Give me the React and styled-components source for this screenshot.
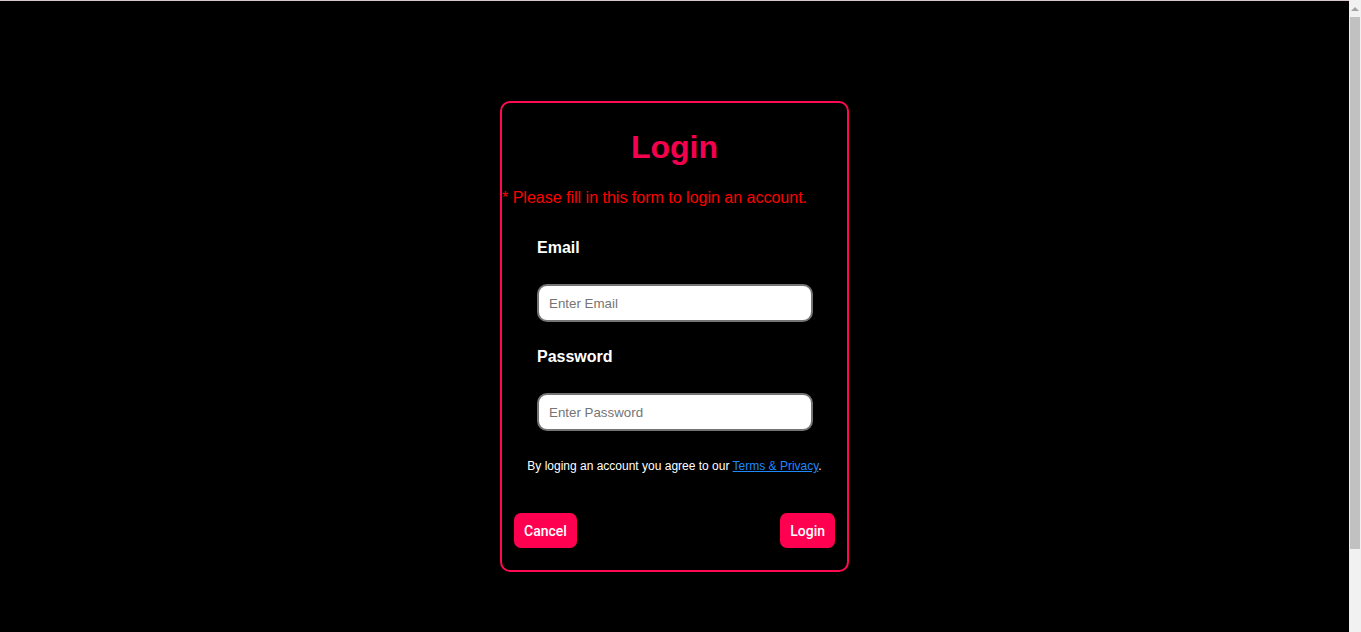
import styled, { createGlobalStyle } from "styled-components";

const GlobalStyle = createGlobalStyle`
  html {
    border-top: 1px solid #d6c6cd;
    background: #000;
  }
  body {
    margin: 0;
    background: #000;
    font-family: "Liberation Sans", Arial, sans-serif;
  }
`;

const Page = styled.div`
  padding: 100px 12px 138px 0;
  display: flex;
  justify-content: center;
`;

const ScrollTrack = styled.div`
  position: fixed;
  top: 0;
  right: 0;
  bottom: 0;
  width: 12px;
  background: #f1f1f1;
  display: flex;
  flex-direction: column;
  align-items: center;
`;

const ScrollArrow = styled.div`
  width: 0;
  height: 0;
  margin-top: 7px;
  border-left: 4px solid transparent;
  border-right: 4px solid transparent;
  border-bottom: 4px solid #a3a3a3;
`;

const ScrollThumb = styled.div`
  width: 10px;
  height: 532px;
  margin-top: 6px;
  background: #c1c1c1;
`;

const Card = styled.form`
  width: 345px;
  height: 467px;
  border: 2px solid #ff0a50;
  border-radius: 10px;
  display: flex;
  flex-direction: column;
`;

const Title = styled.h1`
  margin: 26px 0 23px;
  font-size: 32px;
  font-weight: bold;
  text-align: center;
  color: #f5004f;
`;

const Notice = styled.p`
  margin: 0;
  font-size: 16px;
  color: #ff0000;
`;

const Fields = styled.div`
  padding: 32px 35px 0;
`;

const Label = styled.label`
  display: block;
  font-size: 16px;
  font-weight: bold;
  color: #fff;
  margin-bottom: 27px;
`;

const Input = styled.input`
  display: block;
  box-sizing: border-box;
  width: 276px;
  height: 38px;
  margin: 0 0 26px;
  padding: 0 10px;
  border: 2px solid #747474;
  border-radius: 10px;
  background: #fff;
  font-family: "Liberation Sans", Arial, sans-serif;
  font-size: 13.333px;
  outline: none;

  &::placeholder {
    color: #757575;
  }
`;

const Terms = styled.p`
  margin: 2px 0 0;
  font-size: 12px;
  color: #fff;
  text-align: center;

  a {
    color: #1e88ff;
  }
`;

const Actions = styled.div`
  margin-top: 40px;
  padding: 0 12px;
  display: flex;
  justify-content: space-between;
`;

const Button = styled.button`
  height: 35px;
  padding: 0 10px;
  border: none;
  border-radius: 7px;
  background: #ff0050;
  color: #fff;
  font-family: Roboto, "Liberation Sans", sans-serif;
  font-size: 14px;
  font-weight: 500;
  cursor: pointer;
`;

export default function App() {
  return (
    <>
      <GlobalStyle />
      <Page>
        <Card onSubmit={(e) => e.preventDefault()}>
          <Title>Login</Title>
          <Notice>* Please fill in this form to login an account.</Notice>
          <Fields>
            <Label htmlFor="email">Email</Label>
            <Input id="email" type="text" placeholder="Enter Email" />
            <Label htmlFor="password">Password</Label>
            <Input id="password" type="password" placeholder="Enter Password" />
          </Fields>
          <Terms>
            By loging an account you agree to our <a href="#">Terms &amp; Privacy</a>.
          </Terms>
          <Actions>
            <Button type="button">Cancel</Button>
            <Button type="submit">Login</Button>
          </Actions>
        </Card>
      </Page>
      <ScrollTrack>
        <ScrollArrow />
        <ScrollThumb />
      </ScrollTrack>
    </>
  );
}
